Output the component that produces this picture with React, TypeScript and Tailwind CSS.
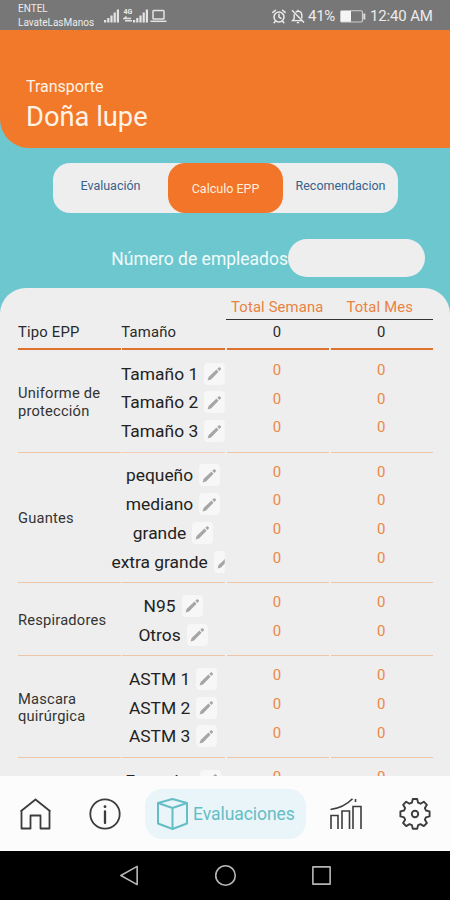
import React from 'react';

interface EppGroup {
  name: string;
  sizes: string[];
}

const groups: EppGroup[] = [
  { name: 'Uniforme de protección', sizes: ['Tamaño 1', 'Tamaño 2', 'Tamaño 3'] },
  { name: 'Guantes', sizes: ['pequeño', 'mediano', 'grande', 'extra grande'] },
  { name: 'Respiradores', sizes: ['N95', 'Otros'] },
  { name: 'Mascara quirúrgica', sizes: ['ASTM 1', 'ASTM 2', 'ASTM 3'] },
  { name: '', sizes: ['Estandar'] },
];

const Signal: React.FC = () => (
  <svg width="16" height="14" viewBox="0 0 16 14" fill="#e4e4e4">
    <rect x="0" y="11" width="2.2" height="2.5" />
    <rect x="3.2" y="9" width="2.2" height="4.5" />
    <rect x="6.4" y="6.5" width="2.2" height="7" />
    <rect x="9.6" y="3.5" width="2.2" height="10" />
    <rect x="12.8" y="0.5" width="2.2" height="13" />
  </svg>
);

const StatusBar: React.FC = () => (
  <div className="flex h-[30px] shrink-0 items-center bg-[#777777] pl-[18px] pr-[17px] pt-[2px] text-[#ececec]">
    <div className="w-[86px] whitespace-nowrap text-[10px] leading-[14px]">
      <div>ENTEL</div>
      <div>LavateLasManos</div>
    </div>
    <Signal />
    <div className="ml-[3px] flex">
      <div className="flex w-[10px] flex-col items-center">
        <span className="text-[7px] font-bold leading-[7px]">4G</span>
        <svg width="10" height="6" viewBox="0 0 10 6" fill="none" stroke="#e4e4e4" strokeWidth="1.4">
          <path d="M3.5 0.5 1 2.5h7M2 4.8h7" />
        </svg>
      </div>
      <Signal />
    </div>
    <svg className="ml-px" width="17" height="14" viewBox="0 0 17 14" fill="none" stroke="#e4e4e4" strokeWidth="1.5">
      <rect x="3" y="1.5" width="11" height="8.5" rx="0.8" />
      <path d="M0.5 12.3h16" />
    </svg>
    <div className="ml-auto flex items-center">
      <svg width="14" height="15" viewBox="0 0 14 15" fill="none" stroke="#ececec" strokeWidth="1.5" strokeLinecap="round">
        <circle cx="7" cy="8" r="5" />
        <path d="M7 5.2V8l2 1.3M0.9 3.4 3.4 1.2M13.1 3.4l-2.5-2.2M3.4 12.3 2.2 13.7M10.6 12.3l1.2 1.4" />
      </svg>
      <svg className="ml-[5px]" width="14" height="15" viewBox="0 0 14 15" fill="none" stroke="#ececec" strokeWidth="1.4">
        <path d="M1 1.2 13 13.4M3.2 5.2v4.6L1.6 11.6h9.6M4.8 3.2C5.4 2.6 6.1 2.3 7 2.3c2.3 0 3.8 1.6 3.8 4v3.2M7 0.8v1.5M5.8 13.6h2.4" />
      </svg>
      <span className="ml-[3px] w-[29px] whitespace-nowrap text-[15px] leading-4 tracking-[-0.3px]">41%</span>
      <svg className="ml-[3px]" width="26" height="13" viewBox="0 0 26 13">
        <rect x="0.6" y="0.8" width="21.8" height="11.2" rx="1.2" fill="none" stroke="#cfcfcf" strokeWidth="1.1" />
        <rect x="1" y="1" width="10" height="10.8" fill="#f5f5f5" />
        <rect x="23.3" y="3.5" width="2" height="6" fill="#dedede" />
      </svg>
      <span className="ml-[4px] w-[63px] whitespace-nowrap text-[15px] leading-4 tracking-[-0.15px]">12:40 AM</span>
    </div>
  </div>
);

const Pencil: React.FC = () => (
  <span className="flex h-[22px] w-[21px] shrink-0 items-center justify-center rounded bg-[#f7f7f7]">
    <svg width="15" height="15" viewBox="0 0 16 16" fill="#a6a6a6">
      <path d="M0.6 15.4 1.7 11.7 10.1 3.8l2.2 2.2-8 8.3zM11 3l1.5-1.4c.4-.4.9-.4 1.3 0l.9.9c.4.4.4.9 0 1.3l-1.5 1.4z" />
    </svg>
  </span>
);

const ZeroColumn: React.FC<{ count: number }> = ({ count }) => (
  <div className="border-b border-[#efc5a8] pt-[4.6px]">
    {Array.from({ length: count }, (_, i) => (
      <div key={i} className="flex h-[28.8px] items-center justify-center pr-[2px] text-[15px] text-[#ed8746]">
        0
      </div>
    ))}
  </div>
);

const GroupRow: React.FC<{ group: EppGroup }> = ({ group }) => (
  <div className="grid grid-cols-[102.5px_102.5px_102.5px_102.5px] gap-x-[1.8px]">
    <div className="flex items-center border-b border-[#efc5a8] pt-[3px] text-[14.7px] leading-[17.5px] tracking-[0.2px] text-[#333333]">
      {group.name}
    </div>
    <div className="border-b border-[#efc5a8] pb-[6.2px] pt-[8.2px] [clip-path:inset(0_0_0_-20px)]">
      {group.sizes.map((size) => (
        <div key={size} className="flex h-[28.8px] items-center justify-center gap-[6px] whitespace-nowrap pr-px text-[17.4px] text-[#222222]">
          <span>{size}</span>
          <Pencil />
        </div>
      ))}
    </div>
    <ZeroColumn count={group.sizes.length} />
    <ZeroColumn count={group.sizes.length} />
  </div>
);

const EppTable: React.FC = () => (
  <div className="min-h-0 flex-1 overflow-hidden rounded-t-[26px] bg-[#eeeeee] pl-[18px] pr-[17px]">
    <div className="flex h-[32px] justify-end pt-[9px]">
      <div className="grid w-[207px] grid-cols-2 border-b-[1.5px] border-[#333333] pr-[2px] text-center text-[14.8px] leading-[21px] tracking-[0.15px] text-[#e98242]">
        <span>Total Semana</span>
        <span>Total Mes</span>
      </div>
    </div>
    <div className="grid h-[30px] grid-cols-[102.5px_102.5px_102.5px_102.5px] gap-x-[1.8px] text-[14.8px] leading-[24px] text-[#292929] [&>div]:border-b-2 [&>div]:border-[#dc7430]">
      <div className="tracking-[0.2px]">Tipo EPP</div>
      <div className="-indent-px tracking-[0.2px]">Tamaño</div>
      <div className="pr-[2px] text-center">0</div>
      <div className="pr-[2px] text-center">0</div>
    </div>
    <div className="pt-[1px]">
      {groups.map((group, i) => (
        <GroupRow key={i} group={group} />
      ))}
    </div>
  </div>
);

const BottomNav: React.FC = () => (
  <nav className="flex h-[75px] shrink-0 items-center bg-[#fcfcfc] pl-[19px] text-[#3c3c3c]">
    <svg width="33" height="34" viewBox="0 0 33 34" fill="none" stroke="currentColor" strokeWidth="1.8">
      <path d="M1.5 14.5 16.5 2.5l15 12M2.5 13.5v18h9V18.5h10v13h9v-18" strokeLinejoin="round" />
    </svg>
    <svg className="ml-[36px]" width="34" height="34" viewBox="0 0 34 34" fill="none" stroke="currentColor" strokeWidth="1.8">
      <circle cx="17" cy="17" r="14.7" />
      <path d="M17 14.5V26" strokeWidth="2.3" strokeLinecap="round" />
      <circle cx="17" cy="9.7" r="1.4" fill="currentColor" stroke="none" />
    </svg>
    <div className="ml-[23px] flex h-[50px] w-[161px] items-center rounded-[17px] bg-[#e9f5f9] pl-[11px] text-[#65bdc6]">
      <svg className="shrink-0" width="33" height="34" viewBox="0 0 33 34" fill="none" stroke="currentColor" strokeWidth="2" strokeLinejoin="round">
        <path d="M16.5 2 31 6v20.5L16.5 32 2 26.5V6zM2 6l14.5 5L31 6M16.5 11v21" />
      </svg>
      <span className="ml-[4px] whitespace-nowrap pt-[2px] text-[17.5px] tracking-[-0.05px]">Evaluaciones</span>
    </div>
    <svg className="ml-[23px]" width="34" height="34" viewBox="0 0 34 34" fill="none" stroke="currentColor" strokeWidth="1.6">
      <path d="M2 32V18.5h7V32M13 32V14h7.5V32M24 32V9.5h8V32" />
      <path d="M1.5 12.5C10 11.5 17 8.5 23.5 1.8M26.5 2v3" />
    </svg>
    <svg className="ml-[35px]" width="34" height="34" viewBox="0 0 34 34" fill="none" stroke="currentColor" strokeWidth="1.9" strokeLinejoin="round">
      <path d="M14.8 2h4.4l.9 3.7 2.4 1 3.3-2 3.1 3.1-2 3.3 1 2.4 3.7.9v5l-3.7.9-1 2.4 2 3.3-3.1 3.1-3.3-2-2.4 1-.9 3.7h-4.4l-.9-3.7-2.4-1-3.3 2-3.1-3.1 2-3.3-1-2.4-3.7-.9v-5l3.7-.9 1-2.4-2-3.3 3.1-3.1 3.3 2 2.4-1z" />
      <circle cx="17" cy="17" r="3.2" />
    </svg>
  </nav>
);

const SystemNav: React.FC = () => (
  <div className="flex h-[49px] shrink-0 items-center justify-center gap-[73px] bg-black">
    {['M20 2.5v19L3 12z', 'M12 1.8a10.2 10.2 0 1 1 0 20.4a10.2 10.2 0 1 1 0-20.4z', 'M3 3h18v18H3z'].map((d) => (
      <svg key={d} width="23" height="23" viewBox="0 0 24 24" fill="none" stroke="#b5b5b5" strokeWidth="1.7" strokeLinejoin="round">
        <path d={d} />
      </svg>
    ))}
  </div>
);

export default function App() {
  return (
    <div className="flex h-[900px] w-[450px] flex-col overflow-hidden bg-[#6dc7cf] font-[Roboto,sans-serif]">
      <StatusBar />
      <header className="h-[118px] shrink-0 rounded-bl-[29px] bg-[#f2792a] pl-[26px] pt-[47px] text-[#fff3e6]">
        <div className="text-[16px] leading-[20px]">Transporte</div>
        <h1 className="mt-[3px] text-[27.3px] leading-[34px]">Doña lupe</h1>
      </header>

      {/* Section tabs */}
      <div className="ml-[53px] mt-[15px] grid h-[50px] w-[345px] shrink-0 grid-cols-3 rounded-[17px] bg-[#eeeeee] text-center text-[12.5px] leading-[46px] text-[#37628c]">
        <div>Evaluación</div>
        <div className="h-[50px] rounded-[17px] bg-[#f2752a] leading-[52px] text-[#ffeede]">Calculo EPP</div>
        <div>Recomendacion</div>
      </div>

      <div className="mb-[11px] mt-[26px] flex h-[38px] shrink-0 items-center justify-end pr-[25px]">
        <span className="pt-[2px] text-[17.5px] text-[#f1fbfb]">Número de empleados</span>
        <div className="h-[38px] w-[137px] rounded-full bg-[#eeeeee]" />
      </div>

      <EppTable />
      <BottomNav />
      <SystemNav />
    </div>
  );
}
